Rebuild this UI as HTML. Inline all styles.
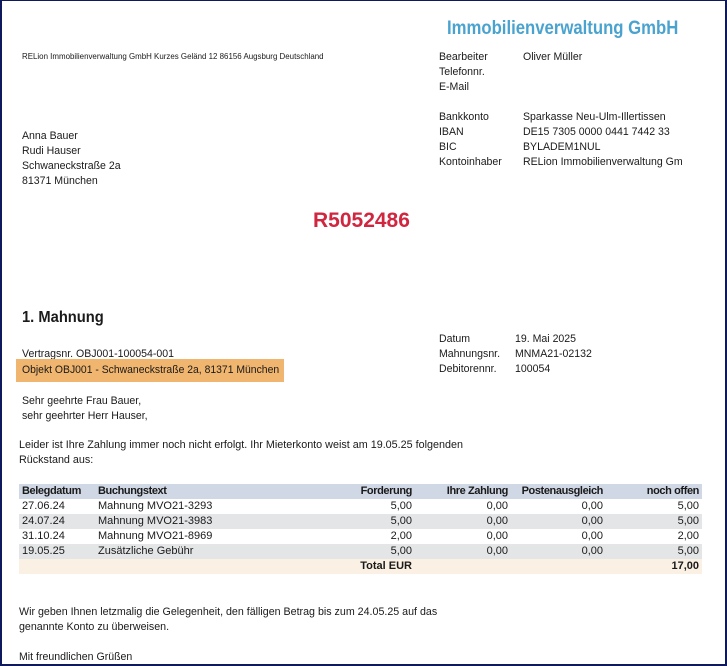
<!DOCTYPE html>
<html><head><meta charset="utf-8"><style>
*{margin:0;padding:0;box-sizing:border-box}
body{width:727px;height:666px;overflow:hidden;background:#fff;font-family:"Liberation Sans",sans-serif;color:#1a1a1a}
#f{position:absolute;left:0;top:0;width:727px;height:666px;border:2px solid #0f1a5c;border-top-width:1px}
.t{position:absolute;font-size:11px;white-space:nowrap;line-height:15px;transform-origin:0 0;transform:scaleX(.96)}
table{position:absolute;left:19px;top:484px;width:683px;border-collapse:collapse;font-size:11px}
td{height:15px;padding:0 3px;white-space:nowrap;line-height:15px}
td.n{text-align:right}
tr.h td{font-weight:bold;letter-spacing:-0.4px}
</style></head><body><div id="f"></div>
<div style="position:absolute;left:447px;top:18px;font-size:19px;font-weight:bold;color:#4aa3cf;white-space:nowrap;transform-origin:0 0;transform:scaleX(.88)">Immobilienverwaltung GmbH</div>
<div class="t" style="left:22px;top:49px;font-size:8px;transform:scaleX(.99)">RELion Immobilienverwaltung GmbH Kurzes Geländ 12 86156 Augsburg Deutschland</div>
<div class="t" style="left:439px;top:50px">Bearbeiter<br>Telefonnr.<br>E-Mail</div>
<div class="t" style="left:523px;top:50px">Oliver Müller</div>
<div class="t" style="left:439px;top:110px">Bankkonto<br>IBAN<br>BIC<br>Kontoinhaber</div>
<div class="t" style="left:523px;top:110px">Sparkasse Neu-Ulm-Illertissen<br>DE15 7305 0000 0441 7442 33<br>BYLADEM1NUL<br>RELion Immobilienverwaltung Gm</div>
<div class="t" style="left:22px;top:129px">Anna Bauer<br>Rudi Hauser<br>Schwaneckstraße 2a<br>81371 München</div>
<div style="position:absolute;left:313px;top:209px;font-size:21px;font-weight:bold;color:#d0263f;transform-origin:0 0;transform:scaleX(1.0)">R5052486</div>
<div style="position:absolute;left:22px;top:309px;font-size:16px;font-weight:bold;transform-origin:0 0;transform:scaleX(.92)">1. Mahnung</div>
<div class="t" style="left:439px;top:332px">Datum<br>Mahnungsnr.<br>Debitorennr.</div>
<div class="t" style="left:515px;top:332px">19. Mai 2025<br>MNMA21-02132<br>100054</div>
<div class="t" style="left:22px;top:347px">Vertragsnr. OBJ001-100054-001</div>
<div style="position:absolute;left:16px;top:359px;width:268px;height:23px;background:#f0b56e"></div>
<div class="t" style="left:22px;top:363px;transform:scaleX(.945)">Objekt OBJ001 - Schwaneckstraße 2a, 81371 München</div>
<div class="t" style="left:22px;top:394px">Sehr geehrte Frau Bauer,<br>sehr geehrter Herr Hauser,</div>
<div class="t" style="left:19px;top:438px;transform:scaleX(.98)">Leider ist Ihre Zahlung immer noch nicht erfolgt. Ihr Mieterkonto weist am 19.05.25 folgenden<br>Rückstand aus:</div>
<table>
<colgroup><col style="width:76px"><col style="width:180px"><col style="width:140px"><col style="width:96px"><col style="width:95px"><col></colgroup>
<tr class="h" style="background:#d0d8e5"><td>Belegdatum</td><td>Buchungstext</td><td class="n">Forderung</td><td class="n">Ihre Zahlung</td><td class="n">Postenausgleich</td><td class="n">noch offen</td></tr>
<tr><td>27.06.24</td><td>Mahnung MVO21-3293</td><td class="n">5,00</td><td class="n">0,00</td><td class="n">0,00</td><td class="n">5,00</td></tr>
<tr style="background:#e3e5e7"><td>24.07.24</td><td>Mahnung MVO21-3983</td><td class="n">5,00</td><td class="n">0,00</td><td class="n">0,00</td><td class="n">5,00</td></tr>
<tr><td>31.10.24</td><td>Mahnung MVO21-8969</td><td class="n">2,00</td><td class="n">0,00</td><td class="n">0,00</td><td class="n">2,00</td></tr>
<tr style="background:#e3e5e7"><td>19.05.25</td><td>Zusätzliche Gebühr</td><td class="n">5,00</td><td class="n">0,00</td><td class="n">0,00</td><td class="n">5,00</td></tr>
<tr style="background:#fbf0e4;font-weight:bold"><td></td><td></td><td class="n">Total EUR</td><td></td><td></td><td class="n">17,00</td></tr>
</table>
<div class="t" style="left:19px;top:605px;transform:scaleX(.97)">Wir geben Ihnen letzmalig die Gelegenheit, den fälligen Betrag bis zum 24.05.25 auf das<br>genannte Konto zu überweisen.</div>
<div class="t" style="left:19px;top:650px">Mit freundlichen Grüßen</div>
</body></html>
